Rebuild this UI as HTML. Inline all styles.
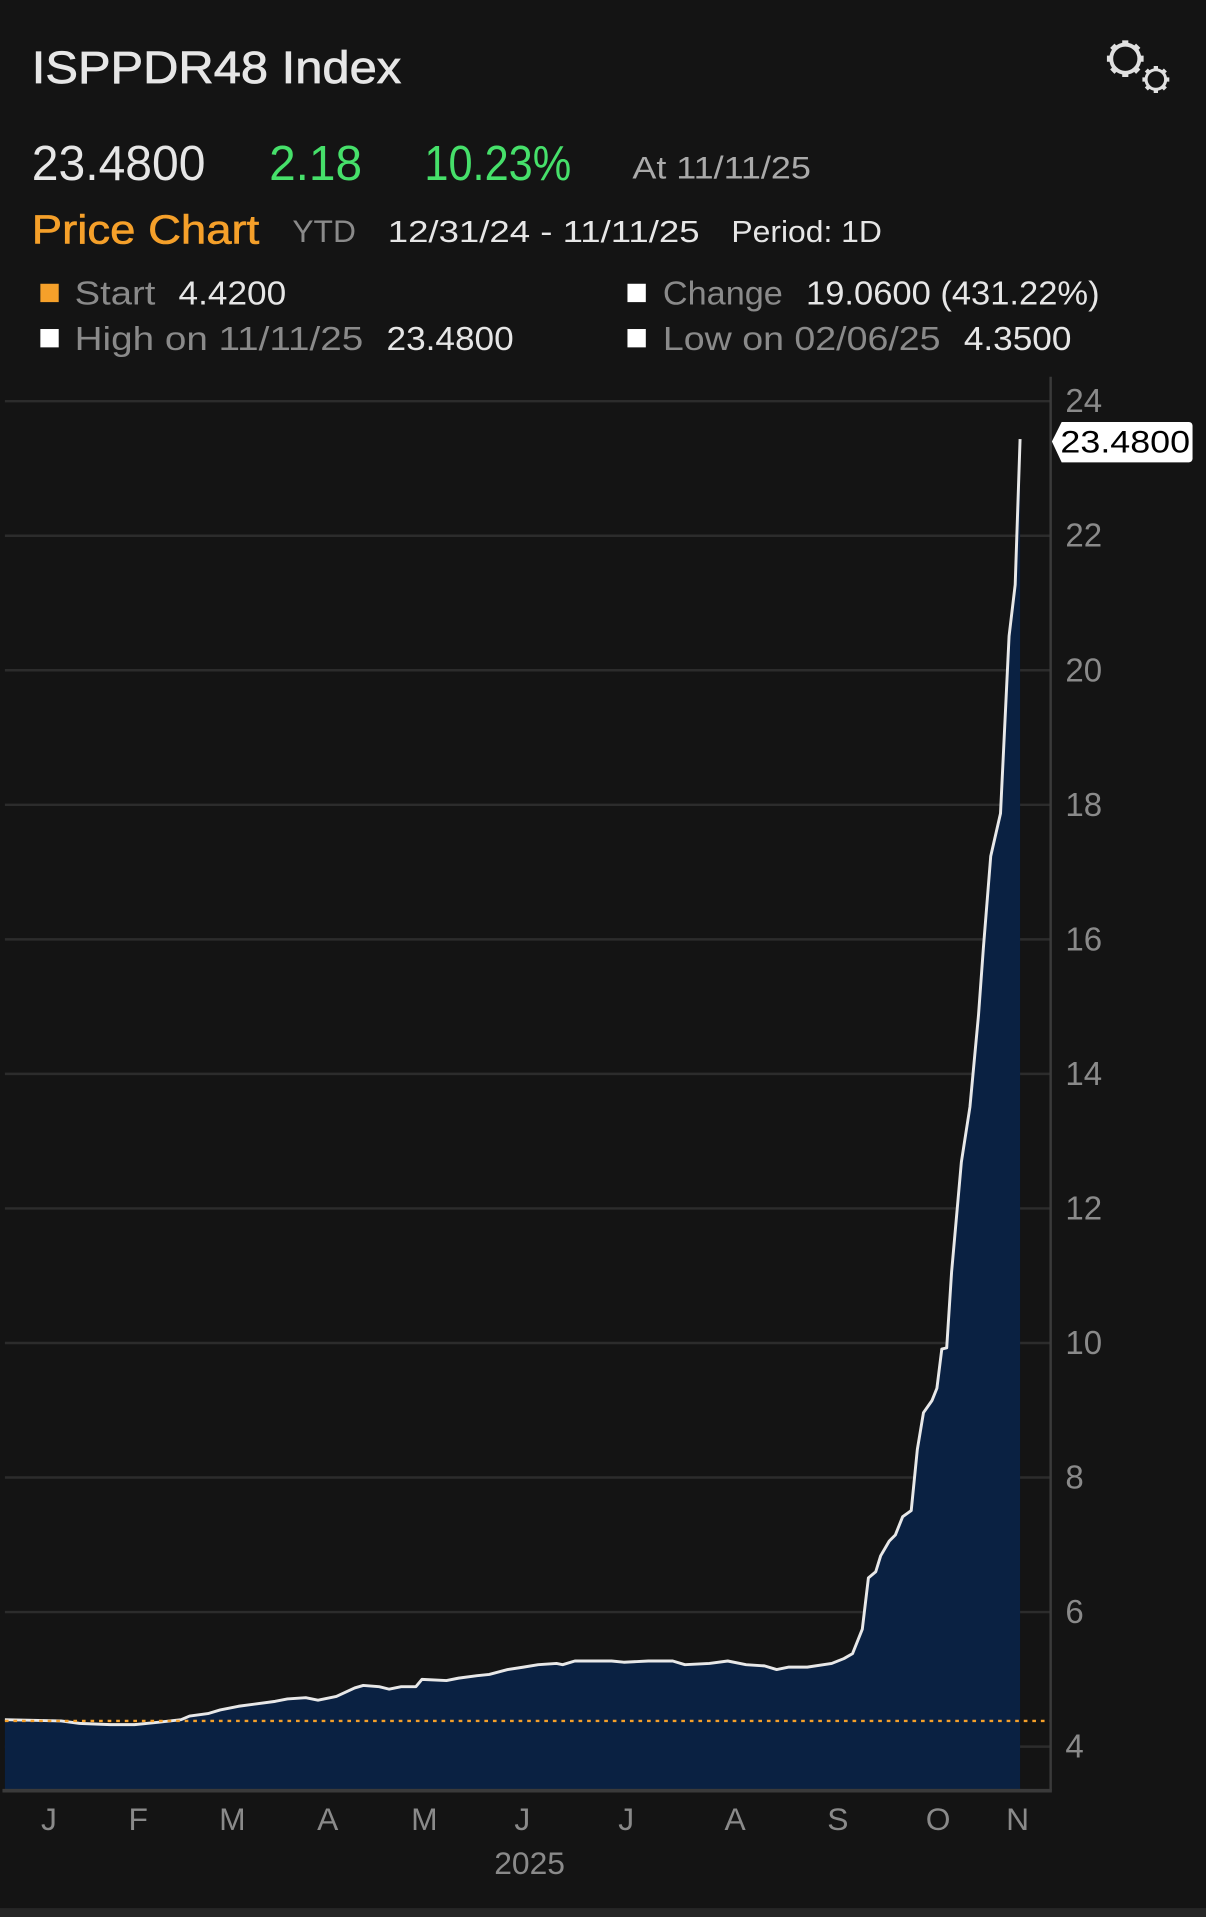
<!DOCTYPE html>
<html><head><meta charset="utf-8"><style>
html,body{margin:0;padding:0;background:#141414;}
svg{display:block}
text{font-family:"Liberation Sans",sans-serif;}
</style></head><body>
<svg width="1206" height="1917" viewBox="0 0 986 1567.3" xmlns="http://www.w3.org/2000/svg">
<rect x="0" y="0" width="986" height="1567.3" fill="#141414"/>
<rect x="0" y="1560" width="986" height="8" fill="#262626"/>
<text x="26" y="68" font-size="37" fill="#e6e6e6" stroke="#e6e6e6" stroke-width="0.6" textLength="302" lengthAdjust="spacingAndGlyphs">ISPPDR48 Index</text>
<g fill="none" stroke="#e0e0e0">
<circle cx="920" cy="48" r="11.5" stroke-width="3.2"/>
<g stroke-width="5">
<path d="M920 33v5M920 58v5M905 48h5M930 48h5M909.4 37.4l3.5 3.5M927.1 55.1l3.5 3.5M909.4 58.6l3.5-3.5M927.1 40.9l3.5-3.5"/>
</g>
<circle cx="945" cy="65" r="8" stroke-width="2.5"/>
<g stroke-width="3.5">
<path d="M945 54v4M945 72v4M934 65h4M952 65h4M937.2 57.2l2.8 2.8M950 70l2.8 2.8M937.2 72.8l2.8-2.8M950 60l2.8-2.8"/>
</g>
</g>
<text x="26" y="147" font-size="40" fill="#e6e6e6" textLength="142" lengthAdjust="spacingAndGlyphs">23.4800</text>
<text x="220" y="147" font-size="40" fill="#46e06a" textLength="76" lengthAdjust="spacingAndGlyphs">2.18</text>
<text x="347" y="147" font-size="40" fill="#46e06a" textLength="120" lengthAdjust="spacingAndGlyphs">10.23%</text>
<text x="517" y="146" font-size="26" fill="#aaaaaa" textLength="146" lengthAdjust="spacingAndGlyphs">At 11/11/25</text>
<text x="26" y="199" font-size="33" fill="#f5a02a" stroke="#f5a02a" stroke-width="0.5" textLength="186" lengthAdjust="spacingAndGlyphs">Price Chart</text>
<text x="239" y="198" font-size="26" fill="#8a8a8a" textLength="52" lengthAdjust="spacingAndGlyphs">YTD</text>
<text x="317" y="198" font-size="25" fill="#e6e6e6" textLength="255" lengthAdjust="spacingAndGlyphs">12/31/24 - 11/11/25</text>
<text x="598" y="198" font-size="25" fill="#e6e6e6" textLength="123" lengthAdjust="spacingAndGlyphs">Period: 1D</text>
<rect x="33" y="232" width="15" height="15" fill="#f5a02a"/>
<text x="61" y="249" font-size="27" fill="#8a8a8a" textLength="66" lengthAdjust="spacingAndGlyphs">Start</text>
<text x="146" y="249" font-size="27" fill="#e6e6e6" textLength="88" lengthAdjust="spacingAndGlyphs">4.4200</text>
<rect x="513" y="232" width="15" height="15" fill="#ffffff"/>
<text x="542" y="249" font-size="27" fill="#8a8a8a" textLength="98" lengthAdjust="spacingAndGlyphs">Change</text>
<text x="659" y="249" font-size="27" fill="#e6e6e6" textLength="240" lengthAdjust="spacingAndGlyphs">19.0600 (431.22%)</text>
<rect x="33" y="269" width="15" height="15" fill="#ffffff"/>
<text x="61" y="286" font-size="27" fill="#8a8a8a" textLength="236" lengthAdjust="spacingAndGlyphs">High on 11/11/25</text>
<text x="316" y="286" font-size="27" fill="#e6e6e6" textLength="104" lengthAdjust="spacingAndGlyphs">23.4800</text>
<rect x="513" y="269" width="15" height="15" fill="#ffffff"/>
<text x="542" y="286" font-size="27" fill="#8a8a8a" textLength="227" lengthAdjust="spacingAndGlyphs">Low on 02/06/25</text>
<text x="788" y="286" font-size="27" fill="#e6e6e6" textLength="88" lengthAdjust="spacingAndGlyphs">4.3500</text>
<g stroke="#2c2c2c" stroke-width="2">
<path d="M4 328H859M4 438H859M4 548H859M4 658H859M4 768H859M4 878H859M4 988H859M4 1098H859M4 1208H859M4 1318H859M4 1428H859"/>
</g>
<polygon fill="#0a2142" points="4,1463 4,1406 50,1407 65,1409 90,1410 110,1410 130,1408 148,1406 155,1403 170,1401 180,1398 195,1395 210,1393 225,1391 235,1389 250,1388 260,1390 275,1387 290,1380 297,1378 310,1379 318,1381 328,1379 340,1379 345,1373 365,1374 375,1372 390,1370 400,1369 415,1365 428,1363 440,1361 455,1360 460,1361 470,1358 500,1358 510,1359 530,1358 550,1358 560,1361 580,1360 595,1358 610,1361 625,1362 635,1365 645,1363 660,1363 680,1360 690,1356 697,1352 705,1332 710,1290 716,1285 720,1272 727,1260 732,1255 738,1240 745,1235 750,1185 755,1155 762,1145 766,1135 770,1103 774,1102 778,1040 786,950 793,905 800,830 804,775 810,700 818,665 825,520 830,478 834,359 834,1463"/>
<polyline fill="none" stroke="#e8e8e8" stroke-width="2.4" stroke-linejoin="round" points="4,1406 50,1407 65,1409 90,1410 110,1410 130,1408 148,1406 155,1403 170,1401 180,1398 195,1395 210,1393 225,1391 235,1389 250,1388 260,1390 275,1387 290,1380 297,1378 310,1379 318,1381 328,1379 340,1379 345,1373 365,1374 375,1372 390,1370 400,1369 415,1365 428,1363 440,1361 455,1360 460,1361 470,1358 500,1358 510,1359 530,1358 550,1358 560,1361 580,1360 595,1358 610,1361 625,1362 635,1365 645,1363 660,1363 680,1360 690,1356 697,1352 705,1332 710,1290 716,1285 720,1272 727,1260 732,1255 738,1240 745,1235 750,1185 755,1155 762,1145 766,1135 770,1103 774,1102 778,1040 786,950 793,905 800,830 804,775 810,700 818,665 825,520 830,478 834,359"/>
<path d="M4 1407H859" stroke="#f5a02a" stroke-width="2" stroke-dasharray="3 4"/>
<path d="M859 308V1464" stroke="#3a3a3a" stroke-width="2"/>
<path d="M2 1464H860" stroke="#3a3a3a" stroke-width="3"/>
<g font-size="27" fill="#8a8a8a">
<text x="871" y="337">24</text><text x="871" y="447">22</text><text x="871" y="557">20</text><text x="871" y="667">18</text><text x="871" y="777">16</text><text x="871" y="887">14</text><text x="871" y="997">12</text><text x="871" y="1107">10</text><text x="871" y="1217">8</text><text x="871" y="1327">6</text><text x="871" y="1437">4</text>
</g>
<path d="M868 345H972a3 3 0 0 1 3 3V375a3 3 0 0 1-3 3H868L860 361Z" fill="#ffffff"/>
<text x="867" y="370" font-size="26" fill="#000" textLength="106" lengthAdjust="spacingAndGlyphs">23.4800</text>
<g font-size="26" fill="#8a8a8a" text-anchor="middle">
<text x="40" y="1496">J</text><text x="113" y="1496">F</text><text x="190" y="1496">M</text><text x="268" y="1496">A</text><text x="347" y="1496">M</text><text x="427" y="1496">J</text><text x="512" y="1496">J</text><text x="601" y="1496">A</text><text x="685" y="1496">S</text><text x="767" y="1496">O</text><text x="832" y="1496">N</text>
<text x="433" y="1532">2025</text>
</g>
</svg>
</body></html>
